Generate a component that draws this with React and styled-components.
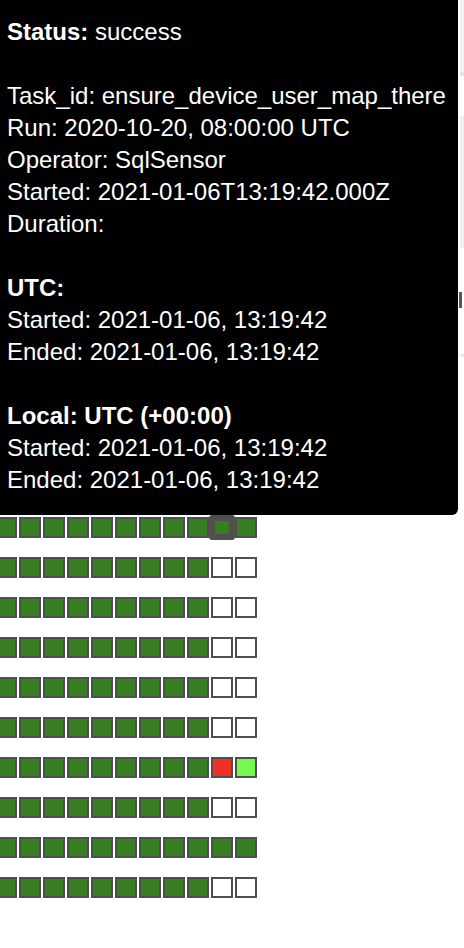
import React from "react";
import styled, { createGlobalStyle } from "styled-components";

const Global = createGlobalStyle`
  html, body { margin: 0; padding: 0; background: #fff; }
  body { font-family: "Liberation Sans", Arial, sans-serif; }
`;

const Page = styled.div`
  position: relative;
  width: 464px;
  height: 948px;
  overflow: hidden;
  display: flex;
  justify-content: space-between;
`;

const Grid = styled.div`
  display: flex;
  flex-direction: column;
  gap: 19px;
  padding-top: 37px;
  margin-left: -5px;
`;

const Row = styled.div`
  display: flex;
  gap: 2px;
  height: 21px;
`;

const fills = {
  success: "#377e22",
  failed: "#ee3124",
  running: "#77f84f",
  none: "#ffffff",
};

const Cell = styled.div`
  box-sizing: border-box;
  width: 22px;
  height: 21px;
  border: 2px solid #4f4f4f;
  background: ${(p) => fills[p.$state]};
  ${(p) =>
    p.$hover &&
    `
    width: 26px;
    height: 25px;
    margin: -2px -2px 0 -2px;
    border-width: 6px;
    border-radius: 3px;
  `}
`;

const Side = styled.div`
  width: 5px;
  display: flex;
  flex-direction: column;
  align-items: flex-end;
`;

const SideBlock = styled.div`
  width: 4px;
  height: ${(p) => p.$h}px;
  margin-top: ${(p) => p.$mt || 0}px;
  background: ${(p) => p.$c};
  border-bottom: ${(p) => (p.$line ? "4px solid #e3e3e3" : "none")};
`;

const Caret = styled.div`
  align-self: flex-start;
  width: 3px;
  height: 16px;
  margin-top: 44px;
  background: #555;
`;

const Tooltip = styled.div`
  position: absolute;
  top: 0;
  left: 0;
  box-sizing: border-box;
  width: 458px;
  padding: 16px 0 19px 7px;
  background: #000;
  color: #fff;
  font-family: "Liberation Sans", Arial, Helvetica, sans-serif;
  font-size: 24px;
  line-height: 32px;
  white-space: nowrap;
  border-bottom-right-radius: 6px;
`;

const Line = styled.div`
  min-height: 32px;
`;

const Bold = styled.strong`
  font-weight: 700;
`;

const G = "success";
const W = "none";

const visibleRows = [
  [...Array(9).fill(G), G, G],
  [...Array(9).fill(G), W, W],
  [...Array(9).fill(G), W, W],
  [...Array(9).fill(G), W, W],
  [...Array(9).fill(G), W, W],
  [...Array(9).fill(G), W, W],
  [...Array(9).fill(G), "failed", "running"],
  [...Array(9).fill(G), W, W],
  [...Array(11).fill(G)],
  [...Array(9).fill(G), W, W],
];

const hiddenRows = Array.from({ length: 12 }, () => Array(11).fill(G));
const rows = [...hiddenRows, ...visibleRows];

export default function App() {
  return (
    <>
      <Global />
      <Page>
        <Grid>
          {rows.map((r, ri) => (
            <Row key={ri}>
              {r.map((s, ci) => (
                <Cell key={ci} $state={s} $hover={ri === 12 && ci === 9} />
              ))}
            </Row>
          ))}
        </Grid>
        <Side>
          <SideBlock $h={72} $c="#f2f2f2" $line />
          <SideBlock $h={132} $mt={40} $c="#efefef" />
          <Caret />
          <SideBlock $h={3} $mt={46} $c="#ececec" />
        </Side>
        <Tooltip>
          <Line>
            <Bold>Status:</Bold> success
          </Line>
          <Line />
          <Line>Task_id: ensure_device_user_map_there</Line>
          <Line>Run: 2020-10-20, 08:00:00 UTC</Line>
          <Line>Operator: SqlSensor</Line>
          <Line>Started: 2021-01-06T13:19:42.000Z</Line>
          <Line>Duration: </Line>
          <Line />
          <Line>
            <Bold>UTC:</Bold>
          </Line>
          <Line>Started: 2021-01-06, 13:19:42</Line>
          <Line>Ended: 2021-01-06, 13:19:42</Line>
          <Line />
          <Line>
            <Bold>Local: UTC (+00:00)</Bold>
          </Line>
          <Line>Started: 2021-01-06, 13:19:42</Line>
          <Line>Ended: 2021-01-06, 13:19:42</Line>
        </Tooltip>
      </Page>
    </>
  );
}
